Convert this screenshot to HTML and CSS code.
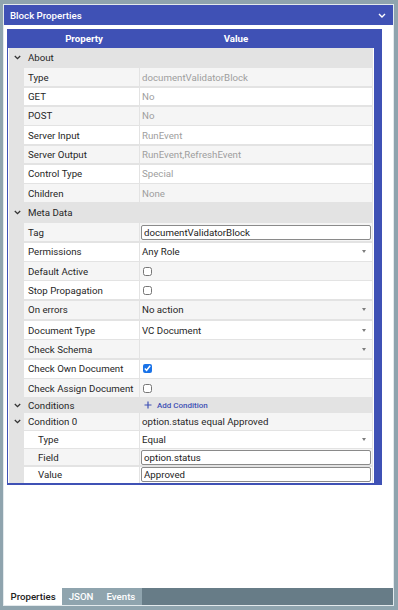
FILE: index.html
```html
<!DOCTYPE html>
<html>
<head>
<title>Block Properties</title>
<link rel="stylesheet" href="styles.css">
</head>
<body>
<div class="panel">
  <div class="panel-head">
    <span>Block Properties</span>
    <svg class="head-chev" width="8" height="5" viewBox="0 0 8 5"><path d="M1 1l3 3 3-3" fill="none" stroke="#fff" stroke-width="1.4"/></svg>
  </div>
  <div class="panel-body">
    <div class="grid">
      <div class="grid-head"><span>Property</span><span>Value</span></div>
      <div class="grid-body">

        <div class="section first">
          <div class="gut"><svg width="7" height="5" viewBox="0 0 7 5"><path d="M0.8 1l2.7 2.7L6.2 1" fill="none" stroke="#333" stroke-width="1.3"/></svg></div>
          <div class="name">About</div>
        </div>
        <div class="row"><div class="gut"></div><div class="name">Type</div><div class="val ro">documentValidatorBlock</div></div>
        <div class="row odd"><div class="gut"></div><div class="name">GET</div><div class="val ro">No</div></div>
        <div class="row"><div class="gut"></div><div class="name">POST</div><div class="val ro">No</div></div>
        <div class="row odd"><div class="gut"></div><div class="name">Server Input</div><div class="val ro">RunEvent</div></div>
        <div class="row"><div class="gut"></div><div class="name">Server Output</div><div class="val ro">RunEvent,RefreshEvent</div></div>
        <div class="row odd"><div class="gut"></div><div class="name">Control Type</div><div class="val ro">Special</div></div>
        <div class="row"><div class="gut"></div><div class="name">Children</div><div class="val ro">None</div></div>

        <div class="section">
          <div class="gut"><svg width="7" height="5" viewBox="0 0 7 5"><path d="M0.8 1l2.7 2.7L6.2 1" fill="none" stroke="#333" stroke-width="1.3"/></svg></div>
          <div class="name">Meta Data</div>
        </div>
        <div class="row"><div class="gut"></div><div class="name">Tag</div><div class="val"><input class="field" type="text" value="documentValidatorBlock"></div></div>
        <div class="row odd"><div class="gut"></div><div class="name">Permissions</div><div class="val sel">Any Role<i class="arrow"></i></div></div>
        <div class="row"><div class="gut"></div><div class="name">Default Active</div><div class="val"><input class="cb" type="checkbox"></div></div>
        <div class="row odd"><div class="gut"></div><div class="name">Stop Propagation</div><div class="val"><input class="cb" type="checkbox"></div></div>
        <div class="row"><div class="gut"></div><div class="name">On errors</div><div class="val sel">No action<i class="arrow"></i></div></div>
        <div class="row odd gap"><div class="gut"></div><div class="name">Document Type</div><div class="val sel">VC Document<i class="arrow"></i></div></div>
        <div class="row"><div class="gut"></div><div class="name">Check Schema</div><div class="val sel"><span></span><i class="arrow"></i></div></div>
        <div class="row odd"><div class="gut"></div><div class="name">Check Own Document</div><div class="val"><input class="cb" type="checkbox" checked></div></div>
        <div class="row"><div class="gut"></div><div class="name">Check Assign Document</div><div class="val"><input class="cb" type="checkbox"></div></div>

        <div class="section small">
          <div class="gut"><svg width="7" height="5" viewBox="0 0 7 5"><path d="M0.8 1l2.7 2.7L6.2 1" fill="none" stroke="#333" stroke-width="1.3"/></svg></div>
          <div class="name">Conditions</div>
          <div class="val add">
            <svg width="8" height="8" viewBox="0 0 8 8"><path d="M4 0.5v7M0.5 4h7" stroke="#3f51b5" stroke-width="1.2"/></svg>
            <span>Add Condition</span>
          </div>
        </div>
        <div class="row cond"><div class="gut"><svg width="7" height="5" viewBox="0 0 7 5"><path d="M0.8 1l2.7 2.7L6.2 1" fill="none" stroke="#333" stroke-width="1.3"/></svg></div><div class="name">Condition 0</div><div class="val">option.status equal Approved</div></div>
        <div class="row cond odd"><div class="gut"></div><div class="name sub">Type</div><div class="val sel">Equal<i class="arrow"></i></div></div>
        <div class="row cond"><div class="gut"></div><div class="name sub">Field</div><div class="val"><input class="field" type="text" value="option.status"></div></div>
        <div class="row cond odd"><div class="gut"></div><div class="name sub">Value</div><div class="val"><input class="field" type="text" value="Approved"></div></div>

      </div>
    </div>
  </div>
  <div class="tabs">
    <div class="tab active">Properties</div>
    <div class="tab">JSON</div>
    <div class="tab">Events</div>
  </div>
</div>
</body>
</html>
```
FILE: styles.css
```css
body{
	margin: 0;
	background: #8fa4ae;
	font-family: Roboto, "Liberation Sans", sans-serif;
	font-size: 9.7px;
	color: #262626;
}
.panel{
	margin: 4px 4px 4px 3px;
	height: 600px;
	border: 1px solid #e3e9ec;
	background: #fff;
	display: flex;
	flex-direction: column;
}
.panel-head{
	height: 20px;
	background: #3f51b5;
	color: #fff;
	font-weight: 500;
	display: flex;
	align-items: center;
	justify-content: space-between;
	padding: 0 7px 0 6px;
}
.panel-body{
	flex: 1;
	padding: 4px 11px 0 3px;
}
.grid{
	background: #3f51b5;
	padding: 0 8px 2px 1px;
}
.grid-head{
	display: flex;
	height: 18.7px;
	align-items: center;
	color: #fff;
	font-weight: 700;
}
.grid-head span{
	width: 152px;
	text-align: center;
}
.grid-body{
	background: #e3e3e3;
	border-left: 1px solid #fff;
	border-right: 1px solid #fff;
}
.section, .row{
	display: flex;
	align-items: stretch;
}
.section{
	height: 18.5px;
	margin-top: 1.5px;
}
.section.first{
	height: 19px;
	margin-top: 0;
}
.section.small{
	height: 14.5px;
	margin-top: 1px;
}
.gut{
	width: 15px;
	flex: none;
	display: flex;
	align-items: center;
	justify-content: center;
	padding-left: 1px;
	box-sizing: border-box;
}
.name{
	width: 115px;
	flex: none;
	padding-left: 4px;
	box-sizing: border-box;
	display: flex;
	align-items: center;
	white-space: nowrap;
}
.name.sub{
	padding-left: 14px;
}
.val{
	width: 232px;
	flex: none;
	margin-left: 1px;
	padding: 0 6px 0 2px;
	box-sizing: border-box;
	display: flex;
	align-items: center;
	white-space: nowrap;
}
.row{
	height: 17.83px;
	margin-top: 1.5px;
}
.row.gap{
	margin-top: 2.5px;
}
.row.cond{
	height: 16.3px;
	margin-top: 1.5px;
}
.section + .row.cond{
	margin-top: 1px;
}
.row .name, .row .val{
	background: #f5f5f5;
}
.row.odd .name, .row.odd .val{
	background: #fff;
}
.ro{
	color: #9e9e9e;
}
.sel{
	justify-content: space-between;
}
.arrow{
	width: 0;
	height: 0;
	border-left: 2.5px solid transparent;
	border-right: 2.5px solid transparent;
	border-top: 3px solid #7d7d7d;
}
.field{
	width: calc(100% + 6px);
	height: 15px;
	margin: 0 -5px 0 -1px;
	padding: 0 2px;
	box-sizing: border-box;
	border: 1px solid #8a8a8a;
	border-radius: 2px;
	font-family: Roboto, "Liberation Sans", sans-serif;
	font-size: 9.7px;
	color: #222;
	background: #fff;
}
.cb{
	width: 9px;
	height: 9px;
	margin: 0 0 0 1px;
	accent-color: #1a73e8;
}
.add{
	padding-left: 4px;
	color: #3f51b5;
	font-size: 8px;
	font-weight: 500;
}
.add span{
	margin-left: 5px;
}
.tabs{
	display: flex;
	height: 17px;
	background: #677c87;
}
.tab{
	padding: 0 6.5px;
	line-height: 17px;
	font-weight: 500;
	color: #fff;
	background: #8fa4ae;
}
.tab.active{
	color: #222;
	background: #fff;
}
```
